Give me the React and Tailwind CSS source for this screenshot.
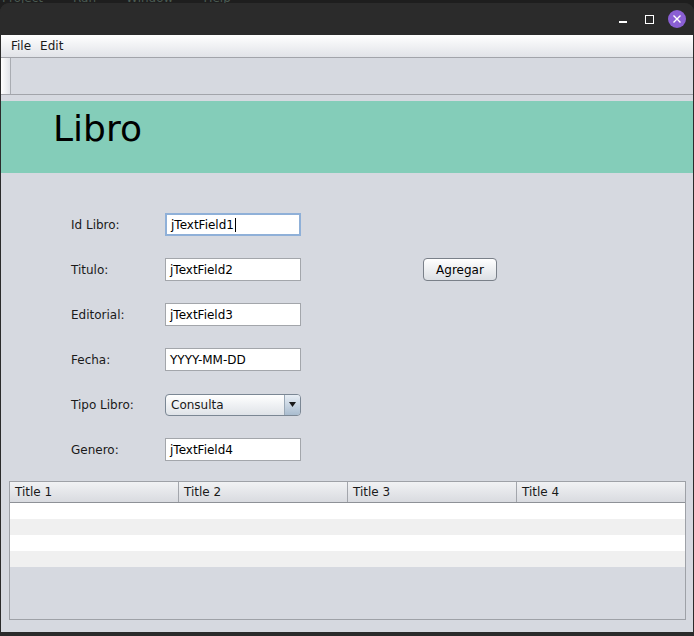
import React from "react";

const font = { fontFamily: '"DejaVu Sans", Verdana, sans-serif' };

function Field({ value, focused }) {
  return (
    <div
      className={
        "h-[23px] w-[136px] bg-white flex items-center pl-[4px] text-[12px] text-black " +
        (focused
          ? "border-2 border-[#8fb0d8]"
          : "border border-[#a3a6ab]")
      }
    >
      <span>{value}</span>
      {focused && <span className="ml-[1px] inline-block w-[1px] h-[14px] bg-black" />}
    </div>
  );
}

export default function App() {
  const labels = ["Id Libro:", "Titulo:", "Editorial:", "Fecha:", "Tipo Libro:", "Genero:"];
  return (
    <div
      className="w-[694px] h-[636px] bg-[#1e1e1e] overflow-hidden flex flex-col"
      style={font}
    >
      <div className="h-[3px] overflow-hidden text-[#4a5a52] text-[12px] leading-[12px] pl-[2px] flex gap-[30px]">
        <span className="-mt-[8px]">Project</span>
        <span className="-mt-[8px]">Run</span>
        <span className="-mt-[8px]">Window</span>
        <span className="-mt-[8px]">Help</span>
      </div>
      <div className="flex-1 flex flex-col rounded-t-[9px] overflow-hidden bg-[#2b2b2b] mx-0">
        {/* title bar */}
        <div className="h-[32px] shrink-0 bg-[#2b2b2b] flex items-center justify-end pr-[8px]">
          <div className="w-[8px] h-[1.5px] bg-white mr-[18px] mt-[6px]" />
          <div className="w-[9px] h-[9px] border-[1.5px] border-white mr-[14px]" />
          <div className="w-[18px] h-[18px] rounded-full bg-[#8a5fd4] flex items-center justify-center">
            <svg width="10" height="10" viewBox="0 0 10 10">
              <path d="M1.5 1.5 L8.5 8.5 M8.5 1.5 L1.5 8.5" stroke="white" strokeWidth="1.4" />
            </svg>
          </div>
        </div>
        <div className="flex-1 flex flex-col mx-[1px] mb-[4px] bg-[#d6d9e0]">
          {/* menu bar */}
          <div className="h-[22px] shrink-0 bg-gradient-to-b from-[#ffffff] to-[#e1e3e8] flex items-center gap-[9px] pl-[10px] text-[12px] text-[#1a1a1a]">
            <span>File</span>
            <span>Edit</span>
          </div>
          {/* toolbar */}
          <div className="h-[38px] shrink-0 border-y border-[#a2a4aa] bg-[#d6d9e0] flex">
            <div className="w-[10px] border-r border-[#a9acb2] bg-gradient-to-r from-[#ffffff] to-[#e2e4e9]" />
          </div>
          {/* banner */}
          <div className="mt-[6px] h-[72px] shrink-0 bg-[#84cdb9] flex items-start pl-[52px] pt-[6px]">
            <span className="text-[36px] leading-[44px] text-black">Libro</span>
          </div>
          {/* form */}
          <div className="pt-[40px] pl-[70px] flex flex-col gap-[22px] text-[12px] text-[#1a1a1a]">
            {labels.map((l, i) => (
              <div key={l} className="flex items-center h-[23px]">
                <div className="w-[94px]">{l}</div>
                {i === 4 ? (
                  <div className="h-[22px] w-[136px] rounded-[4px] border border-[#7b8794] bg-gradient-to-b from-[#ffffff] to-[#dfe3e8] flex items-center overflow-hidden">
                    <span className="pl-[5px] flex-1">Consulta</span>
                    <div className="w-[16px] h-full border-l border-[#9aa8b6] bg-gradient-to-b from-[#e8eef5] to-[#a9bccf] flex items-center justify-center">
                      <svg width="7" height="5" viewBox="0 0 7 5">
                        <path d="M0 0 L7 0 L3.5 5 Z" fill="#1a1a1a" />
                      </svg>
                    </div>
                  </div>
                ) : (
                  <Field
                    value={["jTextField1", "jTextField2", "jTextField3", "YYYY-MM-DD", "", "jTextField4"][i]}
                    focused={i === 0}
                  />
                )}
                {i === 1 && (
                  <div className="ml-[122px] h-[23px] w-[74px] rounded-[4px] border border-[#7a8089] bg-gradient-to-b from-[#ffffff] to-[#dcdfe4] flex items-center justify-center text-[12px] text-black">
                    Agregar
                  </div>
                )}
              </div>
            ))}
          </div>
          {/* table */}
          <div className="mt-[20px] ml-[8px] w-[677px] h-[139px] border border-[#9ea1a7] flex flex-col bg-[#d6d9e0]">
            <div className="h-[21px] shrink-0 flex border-b border-[#8e9197] bg-gradient-to-b from-[#f1f2f4] to-[#d9dbe0] text-[12px] text-[#1a1a1a]">
              {["Title 1", "Title 2", "Title 3", "Title 4"].map((t, i) => (
                <div
                  key={t}
                  className={"w-[169px] flex items-center pl-[5px] " + (i < 3 ? "border-r border-[#a3a6ac]" : "flex-1")}
                >
                  {t}
                </div>
              ))}
            </div>
            <div className="h-[16px] bg-white" />
            <div className="h-[16px] bg-[#f0f0f0]" />
            <div className="h-[16px] bg-white" />
            <div className="h-[16px] bg-[#f0f0f0]" />
          </div>
        </div>
      </div>
    </div>
  );
}
